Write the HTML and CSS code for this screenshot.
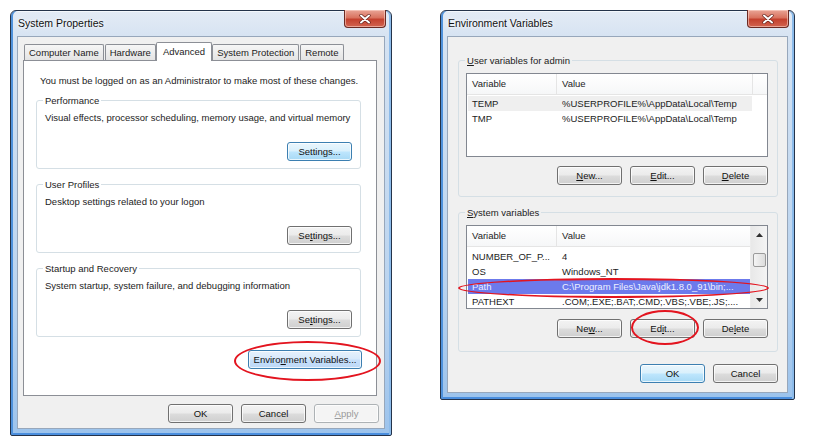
FILE: index.html
```html
<!DOCTYPE html>
<html>
<head>
<meta charset="utf-8">
<title>System Properties</title>
<link rel="stylesheet" href="styles.css">
</head>
<body>
<div class="desk">
  <div class="win win-sys">
    <div class="titlebar">
      <span class="title">System Properties</span>
      <div class="close"><svg width="12" height="10" viewBox="0 0 12 10"><path d="M2 1.5 L10 8.5 M10 1.5 L2 8.5" stroke="#5a1a14" stroke-width="3.2" stroke-linecap="round"/><path d="M2 1.5 L10 8.5 M10 1.5 L2 8.5" stroke="#fff" stroke-width="2" stroke-linecap="round"/></svg></div>
    </div>
    <div class="client sys-client">
      <div class="tabs">
        <div class="tab">Computer Name</div>
        <div class="tab">Hardware</div>
        <div class="tab active">Advanced</div>
        <div class="tab">System Protection</div>
        <div class="tab">Remote</div>
      </div>
      <div class="panel">
        <p class="note">You must be logged on as an Administrator to make most of these changes.</p>
        <fieldset class="group">
          <legend>Performance</legend>
          <p class="desc">Visual effects, processor scheduling, memory usage, and virtual memory</p>
          <div class="btnrow"><button class="btn focus">Settings...</button></div>
        </fieldset>
        <fieldset class="group">
          <legend>User Profiles</legend>
          <p class="desc">Desktop settings related to your logon</p>
          <div class="btnrow"><button class="btn">Se<u>t</u>tings...</button></div>
        </fieldset>
        <fieldset class="group">
          <legend>Startup and Recovery</legend>
          <p class="desc">System startup, system failure, and debugging information</p>
          <div class="btnrow"><button class="btn">Se<u>t</u>tings...</button></div>
        </fieldset>
        <div class="btnrow env-row"><button class="btn focus env">Enviro<u>n</u>ment Variables...</button></div>
      </div>
      <div class="dlgbtns">
        <button class="btn">OK</button>
        <button class="btn">Cancel</button>
        <button class="btn disabled"><u>A</u>pply</button>
      </div>
    </div>
  </div>

  <div class="win win-env">
    <div class="titlebar">
      <span class="title">Environment Variables</span>
      <div class="close"><svg width="12" height="10" viewBox="0 0 12 10"><path d="M2 1.5 L10 8.5 M10 1.5 L2 8.5" stroke="#5a1a14" stroke-width="3.2" stroke-linecap="round"/><path d="M2 1.5 L10 8.5 M10 1.5 L2 8.5" stroke="#fff" stroke-width="2" stroke-linecap="round"/></svg></div>
    </div>
    <div class="client env-client">
      <fieldset class="vgroup user-group">
        <legend><u>U</u>ser variables for admin</legend>
        <div class="list user-list">
          <div class="list-main">
            <div class="lhead">
              <div class="hc c1">Variable</div>
              <div class="hc c2">Value</div>
              <div class="hc c3"></div>
            </div>
            <div class="rows">
              <div class="row hover"><span class="c1">TEMP</span><span class="c2">%USERPROFILE%\AppData\Local\Temp</span></div>
              <div class="row"><span class="c1">TMP</span><span class="c2">%USERPROFILE%\AppData\Local\Temp</span></div>
            </div>
          </div>
        </div>
        <div class="btnrow vbtns">
          <button class="btn"><u>N</u>ew...</button>
          <button class="btn"><u>E</u>dit...</button>
          <button class="btn"><u>D</u>elete</button>
        </div>
      </fieldset>
      <fieldset class="vgroup sys-group">
        <legend><u>S</u>ystem variables</legend>
        <div class="list sys-list">
          <div class="list-main">
            <div class="lhead">
              <div class="hc c1">Variable</div>
              <div class="hc c2">Value</div>
            </div>
            <div class="rows">
              <div class="row"><span class="c1">NUMBER_OF_P...</span><span class="c2">4</span></div>
              <div class="row"><span class="c1">OS</span><span class="c2">Windows_NT</span></div>
              <div class="row selected"><span class="c1">Path</span><span class="c2">C:\Program Files\Java\jdk1.8.0_91\bin;...</span></div>
              <div class="row"><span class="c1">PATHEXT</span><span class="c2">.COM;.EXE;.BAT;.CMD;.VBS;.VBE;.JS;....</span></div>
            </div>
          </div>
          <div class="scrollbar">
            <div class="arrow"><svg width="7" height="4" viewBox="0 0 7 4"><path d="M0 4 L3.5 0 L7 4 Z" fill="#303030"/></svg></div>
            <div class="track"><div class="thumb"></div></div>
            <div class="arrow"><svg width="7" height="4" viewBox="0 0 7 4"><path d="M0 0 L3.5 4 L7 0 Z" fill="#303030"/></svg></div>
          </div>
        </div>
        <div class="btnrow vbtns">
          <button class="btn">Ne<u>w</u>...</button>
          <button class="btn">Ed<u>i</u>t...</button>
          <button class="btn">De<u>l</u>ete</button>
        </div>
      </fieldset>
      <div class="dlgbtns env-dlg">
        <button class="btn focus">OK</button>
        <button class="btn">Cancel</button>
      </div>
    </div>
  </div>

  <div class="ring ring-env"></div>
  <div class="ring ring-path"></div>
  <div class="ring ring-edit"></div>
</div>
</body>
</html>
```

FILE: styles.css
```css
* { box-sizing: border-box; }
html, body { margin: 0; padding: 0; background: #fff; }
body {
  font-family: "Liberation Sans", Arial, sans-serif;
  font-size: 9.5px;
  color: #1c1c1c;
  white-space: nowrap;
}
.desk { position: relative; width: 819px; height: 446px; overflow: hidden; }

/* ---------- windows ---------- */
.win {
  position: absolute;
  display: flex;
  flex-direction: column;
  border: 1px solid #24334a;
  border-radius: 6px 6px 2px 2px;
  background: linear-gradient(to bottom, #e3ebf5 0, #d4e2f2 30px, #b9d3ef 70%, #9cc3ec 100%);
  box-shadow: inset 2px 0 0 #4f92dc, inset -2px 0 0 #8cbbea, inset 0 -2px 0 #4a8ede, inset 0 1px 0 #f4f8fc;
}
.win-sys { left: 10px; top: 10px; width: 382px; height: 426px; }
.win-env { left: 440px; top: 10px; width: 355px; height: 390px; }

.titlebar {
  height: 25px;
  flex: none;
  display: flex;
  justify-content: space-between;
  align-items: flex-start;
}
.title {
  padding: 6px 0 0 7px;
  font-size: 10.5px;
  color: #111;
  text-shadow: 0 0 6px #fff, 0 0 3px #fff;
}
.close {
  width: 42px;
  height: 18px;
  margin: -1px 5px 0 0;
  border: 1px solid #6b2a23;
  border-top: none;
  border-radius: 0 0 4px 4px;
  background: linear-gradient(to bottom, #e9a596 0%, #d9735f 45%, #c4412e 55%, #d26450 100%);
  box-shadow: inset 0 0 0 1px rgba(255, 220, 210, .55);
  display: flex;
  align-items: center;
  justify-content: center;
}

.client {
  flex: 1;
  margin: 0 6px 6px 6px;
  background: #f0f0f0;
  border: 1px solid #97a7bb;
  display: flex;
  flex-direction: column;
}

/* ---------- system properties ---------- */
.sys-client { padding: 5px 0 0 5px; }
.tabs {
  display: flex;
  align-items: flex-end;
  height: 19px;
  margin-bottom: -1px;
  padding-left: 1px;
  position: relative;
  z-index: 1;
}
.tab {
  height: 16px;
  margin-bottom: 1px;
  padding: 0 4px;
  line-height: 15px;
  color: #1c1c1c;
  border: 1px solid #8c8f96;
  border-bottom: none;
  border-radius: 2px 2px 0 0;
  background: linear-gradient(to bottom, #f6f6f6, #e4e4e4);
  margin-right: 1px;
}
.tab.active {
  height: 19px;
  margin: 0 -1px 0 -1px;
  padding: 0 6px;
  line-height: 17px;
  background: #fff;
  position: relative;
  z-index: 2;
}
.tab.active + .tab { margin-left: 1px; }

.panel {
  height: 336px;
  margin-right: 7px;
  background: #fff;
  border: 1px solid #8c8f96;
  padding: 13px 15px 0 12px;
}
.note { margin: 0 0 7px 4px; line-height: 13px; }

.group {
  margin: 0 0 9px 0;
  padding: 0 8px 7px 8px;
  border: 1px solid #d5dfe5;
  border-radius: 3px;
  min-width: 0;
}
.group legend {
  padding: 0 2px;
  margin-left: -2px;
  line-height: 13px;
}
.desc { margin: 4px 0 0 0; line-height: 13px; }
.group .btnrow { margin-top: 18px; }
.btnrow { display: flex; justify-content: flex-end; gap: 8px; }
.env-row { margin-top: 13px; margin-right: -1px; }

.dlgbtns {
  display: flex;
  justify-content: flex-end;
  gap: 8px;
  margin-top: 8px;
  padding-right: 5px;
}

/* ---------- buttons ---------- */
.btn {
  width: 65px;
  height: 19px;
  padding: 0;
  font-family: "Liberation Sans", Arial, sans-serif;
  font-size: 9.5px;
  color: #111;
  border: 1px solid #707070;
  border-radius: 3px;
  background: linear-gradient(to bottom, #f3f3f3 0%, #ebebeb 48%, #dcdcdc 52%, #cfcfcf 100%);
  box-shadow: inset 0 0 0 1px rgba(255, 255, 255, .75);
}
.btn.focus {
  border-color: #3c7fb1;
  background: linear-gradient(to bottom, #eaf6fd 0%, #d9f0fc 48%, #bee6fd 52%, #a7d9f5 100%);
}
.btn.env {
  width: 114px;
  background: linear-gradient(to bottom, #e6f1fc 0%, #d8e9fb 48%, #c6dffa 52%, #bcd8f7 100%);
}
.btn.disabled {
  color: #9a9a9a;
  border-color: #adb2b5;
  background: #f4f4f4;
}

/* ---------- environment variables ---------- */
.env-client { padding: 17px 9px 0 10px; }
.vgroup {
  margin: 0 0 9px 0;
  padding: 0 9px 11px 7px;
  border: 1px solid #d5dfe5;
  border-radius: 3px;
  min-width: 0;
}
.vgroup legend {
  padding: 0 2px;
  margin-left: -1px;
  line-height: 13px;
}
.sys-group { padding-bottom: 13px; }
.list {
  margin-top: 6px;
  border: 1px solid #828790;
  background: #fff;
  display: flex;
  overflow: hidden;
}
.user-list { height: 84px; }
.sys-list { height: 84px; margin-top: 6px; }
.list-main { flex: 1; min-width: 0; }
.lhead {
  display: flex;
  height: 21px;
  border-bottom: 1px solid #e5e5e5;
  background: linear-gradient(to bottom, #ffffff, #f6f7f8);
}
.hc { line-height: 20px; border-right: 1px solid #e5e5e5; }
.lhead .c1 { width: 90px; padding-left: 5px; }
.lhead .c2 { width: 196px; padding-left: 5px; }
.lhead .c3 { flex: 1; border-right: none; }
.sys-list .lhead .c2 { flex: 1; border-right: none; }

.rows { padding: 1px 0 0 1px; }
.sys-list .rows { padding-top: 2px; }
.row {
  display: flex;
  height: 15px;
  line-height: 15px;
  width: 284px;
}
.row .c1 { width: 89px; padding-left: 4px; flex: none; }
.row .c2 { padding-left: 5px; overflow: hidden; }
.row.hover { background: #efefef; }
.row.selected { background: #6c7aec; color: #eef0ff; }

.scrollbar {
  width: 17px;
  flex: none;
  display: flex;
  flex-direction: column;
  background: linear-gradient(to right, #e8e8e8, #f4f4f4);
  border-left: 1px solid #ececec;
}
.arrow { height: 17px; display: flex; align-items: center; justify-content: center; }
.track { flex: 1; padding: 10px 1px 0 2px; }
.thumb {
  height: 14px;
  border: 1px solid #9a9a9a;
  border-radius: 2px;
  background: linear-gradient(to right, #f4f4f4, #dcdcdc);
}
.vbtns { margin-top: 9px; margin-right: 0; }
.sys-group .vbtns { margin-top: 10px; }
.env-dlg { margin-top: 3px; padding-right: 0; }

/* ---------- red annotation rings ---------- */
.ring {
  position: absolute;
  border: 2px solid #e3141f;
  border-radius: 50%;
  pointer-events: none;
}
.ring-env { left: 234px; top: 341px; width: 147px; height: 40px; }
.ring-path { left: 458px; top: 278px; width: 311px; height: 20px; }
.ring-edit { left: 631px; top: 310px; width: 68px; height: 35px; }
```
